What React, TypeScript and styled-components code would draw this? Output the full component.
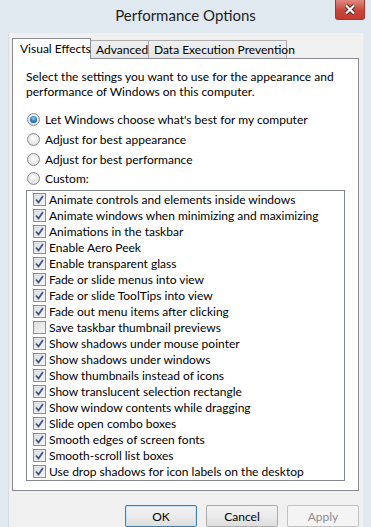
import React from 'react';
import styled, { createGlobalStyle } from 'styled-components';

const GlobalStyle = createGlobalStyle`
  html, body {
    margin: 0;
    padding: 0;
  }

  body {
    font-family: Lato, 'Segoe UI', sans-serif;
    font-size: 12px;
    color: #000;
  }
`;

const Window = styled.div`
  width: 371px;
  height: 527px;
  display: flex;
  flex-direction: column;
  background: #e1e9f0;
  overflow: hidden;
`;

const TitleBar = styled.div`
  height: 33px;
  flex: none;
  display: grid;
  grid-template-columns: 1fr auto 1fr;
  align-items: start;
`;

const Title = styled.div`
  grid-column: 2;
  padding-top: 6px;
  font-size: 15px;
  color: #1e1e1e;
`;

const CloseButton = styled.div`
  grid-column: 3;
  justify-self: end;
  margin-right: 6px;
  width: 30px;
  height: 20px;
  box-sizing: border-box;
  display: flex;
  align-items: center;
  justify-content: center;
  background: linear-gradient(#e0897f, #c9463c 55%, #c23a30);
  border: 1px solid #9c3a33;
  border-top: none;
  border-radius: 0 0 3px 3px;
`;

const Body = styled.div`
  flex: 1;
  margin: 0 8px;
  padding: 5px 0 0 3px;
  background: #f0f0f0;
  border-left: 1px solid #d5dbe0;
  display: flex;
  flex-direction: column;
`;

const TabRow = styled.div`
  height: 20px;
  display: flex;
  align-items: flex-end;
  position: relative;
  z-index: 1;
`;

const Tab = styled.div<{ $active?: boolean; $width: number }>`
  width: ${(p) => p.$width}px;
  height: ${(p) => (p.$active ? 21 : 18)}px;
  margin-bottom: ${(p) => (p.$active ? -1 : 0)}px;
  box-sizing: border-box;
  padding: ${(p) => (p.$active ? '2px 0 0 7px' : '1px 0 0 5px')};
  border: 1px solid ${(p) => (p.$active ? '#898c95' : '#acacac')};
  border-bottom: none;
  border-left-width: ${(p) => (p.$active ? 1 : 0)}px;
  background: ${(p) => (p.$active ? '#fff' : 'linear-gradient(#f0f0f0, #e5e5e5)')};
  white-space: nowrap;
  line-height: 15px;

  &:first-child + & {
    border-left-width: 0;
  }
`;

const Panel = styled.div`
  width: 347px;
  height: 433px;
  box-sizing: border-box;
  background: #fff;
  border: 1px solid #898c95;
  padding: 10px 0 0 13px;
  display: flex;
  flex-direction: column;
`;

const Intro = styled.p`
  margin: 0;
  line-height: 15px;
  color: #000;
`;

const RadioGroup = styled.div`
  margin-top: 11px;
  display: flex;
  flex-direction: column;
`;

const RadioRow = styled.label`
  height: 19.7px;
  display: flex;
  align-items: center;
  gap: 5px;
  padding-left: 1px;
`;

const RadioDot = styled.span<{ $checked?: boolean }>`
  width: 13px;
  height: 13px;
  box-sizing: border-box;
  border-radius: 50%;
  border: 1px solid #8a8a8a;
  background: radial-gradient(circle at 50% 40%, #ffffff 0%, #e6e6e6 60%, #cfcfcf 100%);
  display: flex;
  align-items: center;
  justify-content: center;

  &::after {
    content: '';
    display: ${(p) => (p.$checked ? 'block' : 'none')};
    width: 7px;
    height: 7px;
    border-radius: 50%;
    background: radial-gradient(circle at 50% 35%, #8fd1f7 0%, #2c7fbf 50%, #0d3f6e 100%);
  }
`;

const ListBox = styled.div`
  margin-top: 1px;
  width: 319px;
  height: 291px;
  box-sizing: border-box;
  border: 1px solid #828790;
  padding: 1px 0 0 6px;
  display: flex;
  flex-direction: column;
`;

const CheckRow = styled.div`
  height: 16px;
  display: flex;
  align-items: center;
  gap: 3px;
  white-space: nowrap;
`;

const Box = styled.span`
  width: 13px;
  height: 13px;
  box-sizing: border-box;
  border: 1px solid #8e8f8f;
  background: linear-gradient(135deg, #dcdcdc, #f6f6f6);
  display: flex;
  align-items: center;
  justify-content: center;
`;

const ButtonRow = styled.div`
  margin-top: 14px;
  width: 347px;
  display: flex;
  justify-content: flex-end;
  gap: 9px;
`;

const Button = styled.div<{ $variant?: 'default' | 'disabled' }>`
  width: 72px;
  height: 22px;
  box-sizing: border-box;
  display: flex;
  align-items: center;
  justify-content: center;
  border-radius: 2px;
  border: 1px solid
    ${(p) =>
      p.$variant === 'default' ? '#3c7fb1' : p.$variant === 'disabled' ? '#c2c2c2' : '#acacac'};
  background: ${(p) =>
    p.$variant === 'disabled' ? '#f4f4f4' : 'linear-gradient(#f2f2f2, #ebebeb 50%, #dddddd)'};
  box-shadow: ${(p) => (p.$variant === 'default' ? 'inset 0 0 0 1px #c4e3f8' : 'none')};
  color: ${(p) => (p.$variant === 'disabled' ? '#8d8d8d' : '#000')};
`;

const options = [
  { label: "Let Windows choose what's best for my computer", checked: true },
  { label: 'Adjust for best appearance' },
  { label: 'Adjust for best performance' },
  { label: 'Custom:' },
];

const effects: [string, boolean][] = [
  ['Animate controls and elements inside windows', true],
  ['Animate windows when minimizing and maximizing', true],
  ['Animations in the taskbar', true],
  ['Enable Aero Peek', true],
  ['Enable transparent glass', true],
  ['Fade or slide menus into view', true],
  ['Fade or slide ToolTips into view', true],
  ['Fade out menu items after clicking', true],
  ['Save taskbar thumbnail previews', false],
  ['Show shadows under mouse pointer', true],
  ['Show shadows under windows', true],
  ['Show thumbnails instead of icons', true],
  ['Show translucent selection rectangle', true],
  ['Show window contents while dragging', true],
  ['Slide open combo boxes', true],
  ['Smooth edges of screen fonts', true],
  ['Smooth-scroll list boxes', true],
  ['Use drop shadows for icon labels on the desktop', true],
];

function Check() {
  return (
    <svg width="9" height="9" viewBox="0 0 9 9">
      <path d="M1 4.5 L3.5 7.5 L8 1" fill="none" stroke="#40558a" strokeWidth="1.8" />
    </svg>
  );
}

export default function App() {
  return (
    <>
      <GlobalStyle />
      <Window>
        <TitleBar>
          <Title>Performance Options</Title>
          <CloseButton>
            <svg width="12" height="11" viewBox="0 0 12 11">
              <path d="M2 1.5 L10 9.5 M10 1.5 L2 9.5" stroke="#5a2320" strokeWidth="4" />
              <path d="M2 1.5 L10 9.5 M10 1.5 L2 9.5" stroke="#fff" strokeWidth="2.2" />
            </svg>
          </CloseButton>
        </TitleBar>
        <Body>
          <TabRow>
            <Tab $active $width={79}>Visual Effects</Tab>
            <Tab $width={58}>Advanced</Tab>
            <Tab $width={138}>Data Execution Prevention</Tab>
          </TabRow>
          <Panel>
            <Intro>
              Select the settings you want to use for the appearance and
              <br />
              performance of Windows on this computer.
            </Intro>
            <RadioGroup>
              {options.map((o) => (
                <RadioRow key={o.label}>
                  <RadioDot $checked={o.checked} />
                  {o.label}
                </RadioRow>
              ))}
            </RadioGroup>
            <ListBox>
              {effects.map(([label, on]) => (
                <CheckRow key={label}>
                  <Box>{on && <Check />}</Box>
                  {label}
                </CheckRow>
              ))}
            </ListBox>
          </Panel>
          <ButtonRow>
            <Button $variant="default">OK</Button>
            <Button>Cancel</Button>
            <Button $variant="disabled">Apply</Button>
          </ButtonRow>
        </Body>
      </Window>
    </>
  );
}
